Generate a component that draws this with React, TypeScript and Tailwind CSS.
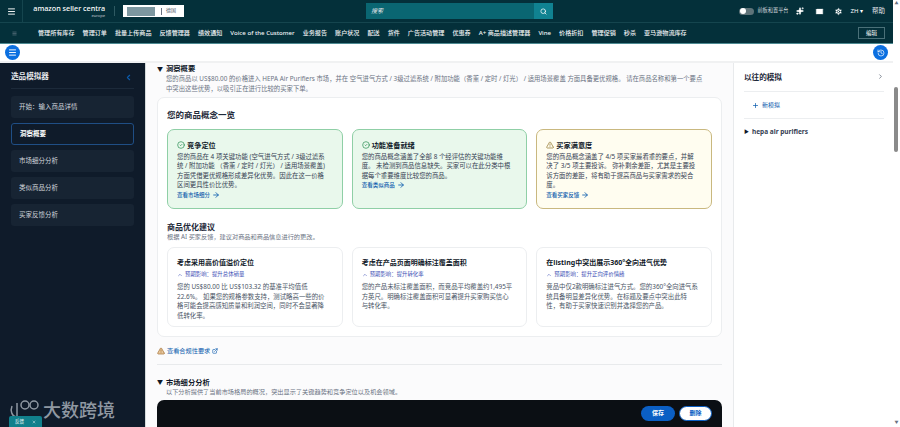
import { AlertTriangle, ArrowRight, ChevronLeft, ChevronRight, ChevronUp, CircleCheck, ExternalLink, History, Mail, Menu, Plus, Search, Settings, Sparkles, X } from "lucide-react";

const navItems = ["管理所有库存", "管理订单", "批量上传商品", "反馈管理器", "绩效通知", "Voice of the Customer", "业务报告", "账户状况", "配送", "货件", "广告活动管理", "优惠券", "A+ 商品描述管理器", "Vine", "价格折扣", "管理促销", "秒杀", "亚马逊物流库存"];
const steps = ["开始：输入商品详情", "洞察概要", "市场细分分析", "类似商品分析", "买家反馈分析"];

const concepts = [
  {
    title: "竞争定位",
    body: "您的商品在 4 项关键功能 (空气进气方式 / 3级过滤系统 / 附加功能 （香薰 / 定时 / 灯光） / 适用场景覆盖) 方面凭借更优规格形成差异化优势。因此在这一价格区间更具性价比优势。",
    link: "查看市场细分",
    warn: false,
  },
  {
    title: "功能准备就绪",
    body: "您的商品概念涵盖了全部 8 个经评估的关键功能维度。 未检测到商品信息缺失。买家可以在此分类中根据每个重要维度比较您的商品。",
    link: "查看类似商品",
    warn: false,
  },
  {
    title: "买家满意度",
    body: "您的商品概念涵盖了 4/5 项买家最看重的要点，并解决了 3/5 项主要投诉。 弥补剩余差距，尤其是主要投诉方面的差距，将有助于提高商品与买家需求的契合度。",
    link: "查看买家反馈",
    warn: true,
  },
];

const suggestions = [
  {
    title: "考虑采用高价值溢价定位",
    impact: "预期影响：提升总体销量",
    body: "您的 US$80.00 比 US$103.32 的基准平均值低 22.6%。 如果您的规格参数支持，测试略高一些的价格可能会提高感知质量和利润空间，同时不会显著降低转化率。",
  },
  {
    title: "考虑在产品页面明确标注覆盖面积",
    impact: "预期影响：提升转化率",
    body: "您的产品未标注覆盖面积，而竞品平均覆盖约1,495平方英尺。明确标注覆盖面积可显著提升买家购买信心与转化率。",
  },
  {
    title: "在listing中突出展示360°全向进气优势",
    impact: "预期影响：提升正向评价情绪",
    body: "竞品中仅2款明确标注进气方式。您的360°全向进气系统具备明显差异化优势。在标题及要点中突出此特性，有助于买家快速识别并选择您的产品。",
  },
];

function TopBar() {
  return (
    <div className="h-[44px] shrink-0 border-b border-[#4d8a92] bg-[#04303a] text-white">
      <div className="flex h-[23px] items-center border-b border-[#15454e]">
        <div className="flex h-full w-[23px] items-center justify-center border-r border-[#15454e]">
          <Menu size={9} strokeWidth={2.5} />
        </div>
        <div className="ml-[8px] flex w-[74px] flex-col items-end">
          <span className="text-[7.2px] leading-[9px] font-medium whitespace-nowrap">amazon seller centra</span>
          <span className="text-[4px] leading-[5px] text-gray-300">europe</span>
        </div>
        <div className="ml-[9px] h-[10px] w-px bg-[#2e5a62]" />
        <div className="ml-[8px] flex h-[12px] w-[61px] items-center bg-white px-[4px]">
          <div className="h-[9px] w-[28px] bg-[#7d97a0]" />
          <div className="ml-[6px] h-[7px] w-px bg-gray-500" />
          <span className="ml-[4px] text-[5px] text-gray-600">德国</span>
        </div>
        <div className="ml-[182px] flex h-[16px] w-[187px] items-center justify-between bg-[#0a6672] pl-[5px]">
          <span className="text-[6px] italic text-gray-200">搜索</span>
          <div className="flex h-full w-[19px] items-center justify-center bg-[#108291]">
            <Search size={7} strokeWidth={2.5} />
          </div>
        </div>
        <div className="ml-auto flex items-center">
          <div className="flex h-[7px] w-[15px] items-center rounded-full bg-[#5e7379] pl-[1px]">
            <div className="h-[6px] w-[6px] rounded-full bg-white" />
          </div>
          <span className="ml-[3px] text-[5.2px] text-gray-300">前板和置平台</span>
          <Sparkles size={8} fill="white" className="ml-[7px]" />
          <Mail size={9} fill="white" stroke="#04303a" className="ml-[11px]" />
          <Settings size={9} fill="white" stroke="#04303a" className="ml-[10px]" />
          <span className="ml-[8px] text-[6px]">ZH ▾</span>
          <span className="mr-[8px] ml-[9px] text-[6.5px] text-gray-200">帮助</span>
        </div>
      </div>
      <div className="flex h-[20px] items-center">
        <Menu size={5} className="ml-[12px] text-gray-400" />
        <div className="ml-[21px] flex items-center gap-[8px]">
          {navItems.map((item) => (
            <span key={item} className="text-[6.1px] font-medium whitespace-nowrap text-gray-100">{item}</span>
          ))}
        </div>
        <div className="mr-[8px] ml-auto flex h-[12px] w-[27px] items-center justify-center border border-[#4a7078] text-[5.5px]">编辑</div>
      </div>
    </div>
  );
}

function Sidebar() {
  return (
    <aside className="relative w-[146px] shrink-0 border-r border-[#d5dbdb] bg-[#0f1b2a] px-[11px]">
      <div className="flex h-[26px] items-center justify-between border-b border-[#1c2a3a] pt-[3px]">
        <span className="text-[7.6px] font-bold text-gray-200">选品模拟器</span>
        <ChevronLeft size={9} strokeWidth={3} className="mr-[1px] text-[#0b5cad]" />
      </div>
      <div className="mt-[7px] flex flex-col gap-[5px]">
        {steps.map((step, i) => (
          <div
            key={step}
            className={`flex h-[22px] items-center rounded-[3px] pl-[8px] text-[6.5px] ${
              i === 1 ? "border border-[#1f4e85] font-bold text-white" : "bg-[#172433] text-gray-300"
            }`}
          >
            {step}
          </div>
        ))}
      </div>
    </aside>
  );
}

function ConceptCard({ title, body, link, warn }: (typeof concepts)[number]) {
  return (
    <div className={`h-[80px] flex-1 rounded-[7px] border pt-[10px] pr-[12px] pl-[9px] ${warn ? "border-[#c9b87f] bg-[#fffdf0]" : "border-[#8fcfa6] bg-[#e9f8ec]"}`}>
      <div className="flex items-center gap-[2px]">
        {warn ? (
          <AlertTriangle size={8} strokeWidth={2} className="text-[#8a6d1f]" />
        ) : (
          <CircleCheck size={8} strokeWidth={2} className="text-[#1f8a4c]" />
        )}
        <span className="text-[7.2px] font-bold text-gray-900">{title}</span>
      </div>
      <p className="mt-[1px] text-[6.4px] leading-[9.5px] text-gray-700">{body}</p>
      <div className="mt-[1px] flex items-center gap-[2px] text-[5.5px] font-medium text-[#0b5cad]">
        {link}
        <ArrowRight size={8} strokeWidth={2.5} />
      </div>
    </div>
  );
}

function SuggestionCard({ title, impact, body }: (typeof suggestions)[number]) {
  return (
    <div className="h-[80px] flex-1 rounded-[7px] border border-[#eceef0] bg-white pt-[10px] pr-[12px] pl-[9px]">
      <div className="text-[7px] leading-[9px] font-bold whitespace-nowrap text-gray-900">{title}</div>
      <div className="mt-[4px] flex items-center gap-[2px] text-[5.4px] leading-[7px] text-[#3d4fb5]">
        <ChevronUp size={6} strokeWidth={2} />
        {impact}
      </div>
      <p className="mt-[4px] text-[6.4px] leading-[9.5px] text-gray-600">{body}</p>
    </div>
  );
}

function MainPanel() {
  return (
    <main className="relative min-w-0 flex-1 overflow-hidden bg-[#fbfbfc] pr-[11px] pl-[11px]">
      <div className="flex h-[9px] items-center pt-[3px] text-[7.3px] leading-none font-bold text-gray-900">
        <span className="mr-[3px] text-[6px]">▼</span>洞察概要
      </div>
      <p className="mt-[2px] pl-[9px] text-[6.35px] leading-[9.5px] whitespace-nowrap text-gray-500">
        您的商品以 US$80.00 的价格进入 HEPA Air Purifiers 市场，并在 空气进气方式 / 3级过滤系统 / 附加功能（香薰 / 定时 / 灯光） / 适用场景覆盖 方面具备更优规格。 请在商品名称和第一个要点
        <br />
        中突出这些优势，以吸引正在进行比较的买家下单。
      </p>
      <section className="mt-[4px] h-[240px] rounded-[7px] border border-[#eceef0] bg-white px-[9px]">
        <h2 className="mt-[11px] text-[8.5px] leading-[11px] font-bold text-gray-800">您的商品概念一览</h2>
        <div className="mt-[9px] flex gap-[9px]">
          {concepts.map((c) => <ConceptCard key={c.title} {...c} />)}
        </div>
        <h2 className="mt-[12px] text-[8px] leading-[11px] font-bold text-gray-800">商品优化建议</h2>
        <p className="mt-[1px] text-[6.2px] leading-[8px] text-gray-500">根据 AI 买家反馈，建议对商品和商品信息进行的更改。</p>
        <div className="mt-[6px] flex gap-[9px]">
          {suggestions.map((s) => <SuggestionCard key={s.title} {...s} />)}
        </div>
      </section>
      <div className="mt-[9px] flex items-center gap-[2px] text-[6.2px] text-[#0b5cad]">
        <AlertTriangle size={8} fill="#e8c9a0" className="text-[#a06a2a]" />
        查看合规性要求
        <ExternalLink size={6} strokeWidth={2.5} />
      </div>
      <div className="mt-[9px] border-t border-[#e8eaec]" />
      <div className="mt-[13px] flex items-center text-[7.3px] leading-[9px] font-bold text-gray-900">
        <span className="mr-[3px] text-[6px]">▼</span>市场细分分析
      </div>
      <p className="mt-[1px] pl-[9px] text-[6.2px] leading-[8px] whitespace-nowrap text-gray-500">以下分析提供了当前市场格局的概况，突出显示了关键趋势和竞争定位以及机会领域。</p>
      <div className="absolute right-[11px] bottom-0 left-[11px] flex h-[27px] items-center justify-end gap-[4px] rounded-t-[7px] bg-[#0b0f14] pr-[10px]">
        <button type="button" className="flex h-[15px] w-[34px] items-center justify-center rounded-full bg-[#0b5fc4] text-[6px] font-bold text-white">保存</button>
        <button type="button" className="flex h-[15px] w-[33px] items-center justify-center rounded-full border border-[#0b5fc4] bg-white text-[6px] font-bold text-[#0b5fc4]">删除</button>
      </div>
    </main>
  );
}

function RightPanel() {
  return (
    <aside className="w-[160px] shrink-0 border-l border-[#e8eaec] bg-white pr-[9px] pl-[10px]">
      <div className="flex h-[29px] items-center justify-between border-b border-[#eceef0] pt-[2px]">
        <span className="text-[7.6px] font-bold text-gray-800">以往的模拟</span>
        <ChevronRight size={7} strokeWidth={2} className="mb-[3px] text-gray-700" />
      </div>
      <div className="flex h-[27px] items-center gap-[3px] border-b border-[#eceef0] pl-[8px] text-[6px] text-[#0b5cad]">
        <Plus size={7} strokeWidth={2.5} />
        新模拟
      </div>
      <div className="flex h-[25px] items-center gap-[3px] text-[6.5px] font-bold text-gray-700">
        <span className="text-[5px] text-gray-900">▶</span>
        hepa air purifiers
      </div>
    </aside>
  );
}

export default function App() {
  return (
    <div className="relative flex h-[427px] w-[900px] overflow-hidden bg-white font-['Noto_Sans','Noto_Sans_CJK_SC',sans-serif]">
      <div className="flex min-w-0 flex-1 flex-col">
        <TopBar />
        <div className="flex h-[19px] shrink-0 items-center justify-between border-b-2 border-[#f0f1f2] bg-white pr-[5px] pl-[5px]">
          <div className="flex h-[15px] w-[15px] items-center justify-center rounded-full bg-[#0b6fe0] text-white">
            <Menu size={9} strokeWidth={2.5} />
          </div>
          <div className="flex h-[15px] w-[15px] items-center justify-center rounded-full bg-[#0b6fe0] text-white">
            <History size={8} strokeWidth={2} />
          </div>
        </div>
        <div className="flex min-h-0 flex-1">
          <Sidebar />
          <MainPanel />
          <RightPanel />
        </div>
      </div>
      <div className="relative flex w-[7px] shrink-0 flex-col items-center justify-between bg-white py-[1px] text-[4px] text-gray-500">
        <span>▲</span>
        <div className="absolute top-[87px] left-[1px] h-[65px] w-[4px] rounded-full bg-[#8a8a8a]" />
        <span>▼</span>
      </div>
      <div className="absolute bottom-[6px] left-[9px] flex items-center text-[#8f98a2]">
        <svg width="32" height="22" viewBox="0 0 32 22" fill="none" stroke="currentColor" strokeWidth="1.5">
          <path d="M3 7 C1 12 3 17 7 18" />
          <path d="M8 4 V20 H13" />
          <circle cx="16" cy="6" r="4" />
          <circle cx="25" cy="6" r="4" />
        </svg>
        <span className="ml-[2px] text-[18px] leading-none font-medium">大数跨境</span>
      </div>
      <div className="absolute bottom-0 left-[9px] flex h-[11px] w-[33px] items-center justify-between rounded-t-[2px] bg-[#11808c] px-[6px] text-[4.5px] text-white">
        反馈
        <X size={4} strokeWidth={2.5} />
      </div>
    </div>
  );
}
